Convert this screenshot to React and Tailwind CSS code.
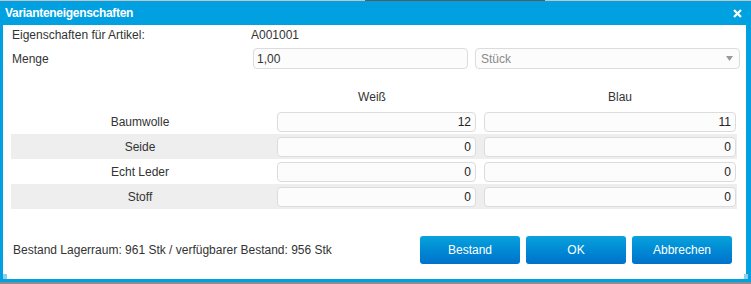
import React from "react";

const rows = [
  { name: "Baumwolle", a: "12", b: "11", gray: false },
  { name: "Seide", a: "0", b: "0", gray: true },
  { name: "Echt Leder", a: "0", b: "0", gray: false },
  { name: "Stoff", a: "0", b: "0", gray: true },
];

function Field({ value, className = "" }) {
  return (
    <div
      className={
        "h-[20px] rounded-[4px] border border-[#dcdcdc] bg-[#fcfcfc] flex items-center justify-end pr-[4px] text-[12px] text-[#222] " +
        className
      }
    >
      {value}
    </div>
  );
}

function Btn({ children }) {
  return (
    <div className="w-[100px] h-[28px] rounded-[3px] bg-gradient-to-b from-[#0aa2dc] to-[#0071cb] flex items-center justify-center text-white text-[12px]">
      {children}
    </div>
  );
}

export default function App() {
  return (
    <div
      className="w-[751px] h-[284px] overflow-hidden flex flex-col bg-[#a3a3a3]"
      style={{ fontFamily: '"Liberation Sans", Arial, sans-serif' }}
    >
      <div className="h-[1px] flex shrink-0 bg-[#c4c4c4]">
        <div className="w-[365px]" />
        <div className="w-[180px] bg-[#5a5a5a]" />
      </div>
      <div className="h-[281px] shrink-0 bg-[#00a0e1] flex flex-col pl-[3px] pr-[5px] pb-[3px]">
        <div className="h-[24px] shrink-0 flex items-center justify-between pl-[2px] pr-[3px] -ml-[3px] -mr-[5px] pl-[5px]">
          <span className="text-white font-bold text-[12px] tracking-[-0.3px]">
            Varianteneigenschaften
          </span>
          <svg width="9" height="9" viewBox="0 0 9 9" className="mr-[6px]">
            <path d="M1 1 L8 8 M8 1 L1 8" stroke="white" strokeWidth="2.2" />
          </svg>
        </div>
        <div className="flex-1 bg-white relative text-[12px] text-[#333] flex flex-col">
          <div className="h-[20px] flex items-center">
            <div className="w-[248px] pl-[9px]">Eigenschaften für Artikel:</div>
            <div>A001001</div>
          </div>
          <div className="h-[21px] mt-[3px] flex items-center">
            <div className="w-[250px] pl-[9px]">Menge</div>
            <div className="w-[215px] h-[21px] rounded-[4px] border border-[#dcdcdc] bg-[#fcfcfc] flex items-center pl-[3px] text-[#333]">
              1,00
            </div>
            <div className="ml-[7px] w-[265px] h-[21px] rounded-[4px] border border-[#dcdcdc] bg-[#fcfcfc] flex items-center justify-between pl-[5px] pr-[6px] text-[#8a8a8a]">
              <span>Stück</span>
              <svg width="7" height="5" viewBox="0 0 7 5">
                <path d="M0 0 H7 L3.5 5 Z" fill="#9a9a9a" />
              </svg>
            </div>
          </div>
          <div className="h-[20px] mt-[18px] flex items-center">
            <div className="w-[265px]" />
            <div className="w-[208px] text-center">Weiß</div>
            <div className="w-[24px]" />
            <div className="w-[240px] text-center">Blau</div>
          </div>
          <div className="mt-[2px] ml-[8px] w-[726px] flex flex-col">
            {rows.map((r) => (
              <div
                key={r.name}
                className={
                  "h-[25px] flex items-center pt-[1px] " +
                  (r.gray ? "bg-[#eeeeee]" : "bg-white")
                }
              >
                <div className="w-[258px] text-center">{r.name}</div>
                <Field value={r.a} className="ml-[8px] w-[199px]" />
                <Field value={r.b} className="ml-[8px] w-[252px]" />
              </div>
            ))}
          </div>
          <div className="mt-[27px] h-[28px] flex items-center">
            <div className="pl-[10px] w-[417px]">
              Bestand Lagerraum: 961 Stk / verfügbarer Bestand: 956 Stk
            </div>
            <div className="flex gap-[6px]">
              <Btn>Bestand</Btn>
              <Btn>OK</Btn>
              <Btn>Abbrechen</Btn>
            </div>
          </div>
          <div className="absolute left-0 bottom-0 w-[4px] h-[5px] bg-[#8fd0ef]" />
          <div className="absolute right-[-2px] bottom-0 w-[4px] h-[5px] bg-[#8fd0ef]" />
        </div>
      </div>
      <div className="h-[2px] bg-[#8c8c8c]" />
    </div>
  );
}
